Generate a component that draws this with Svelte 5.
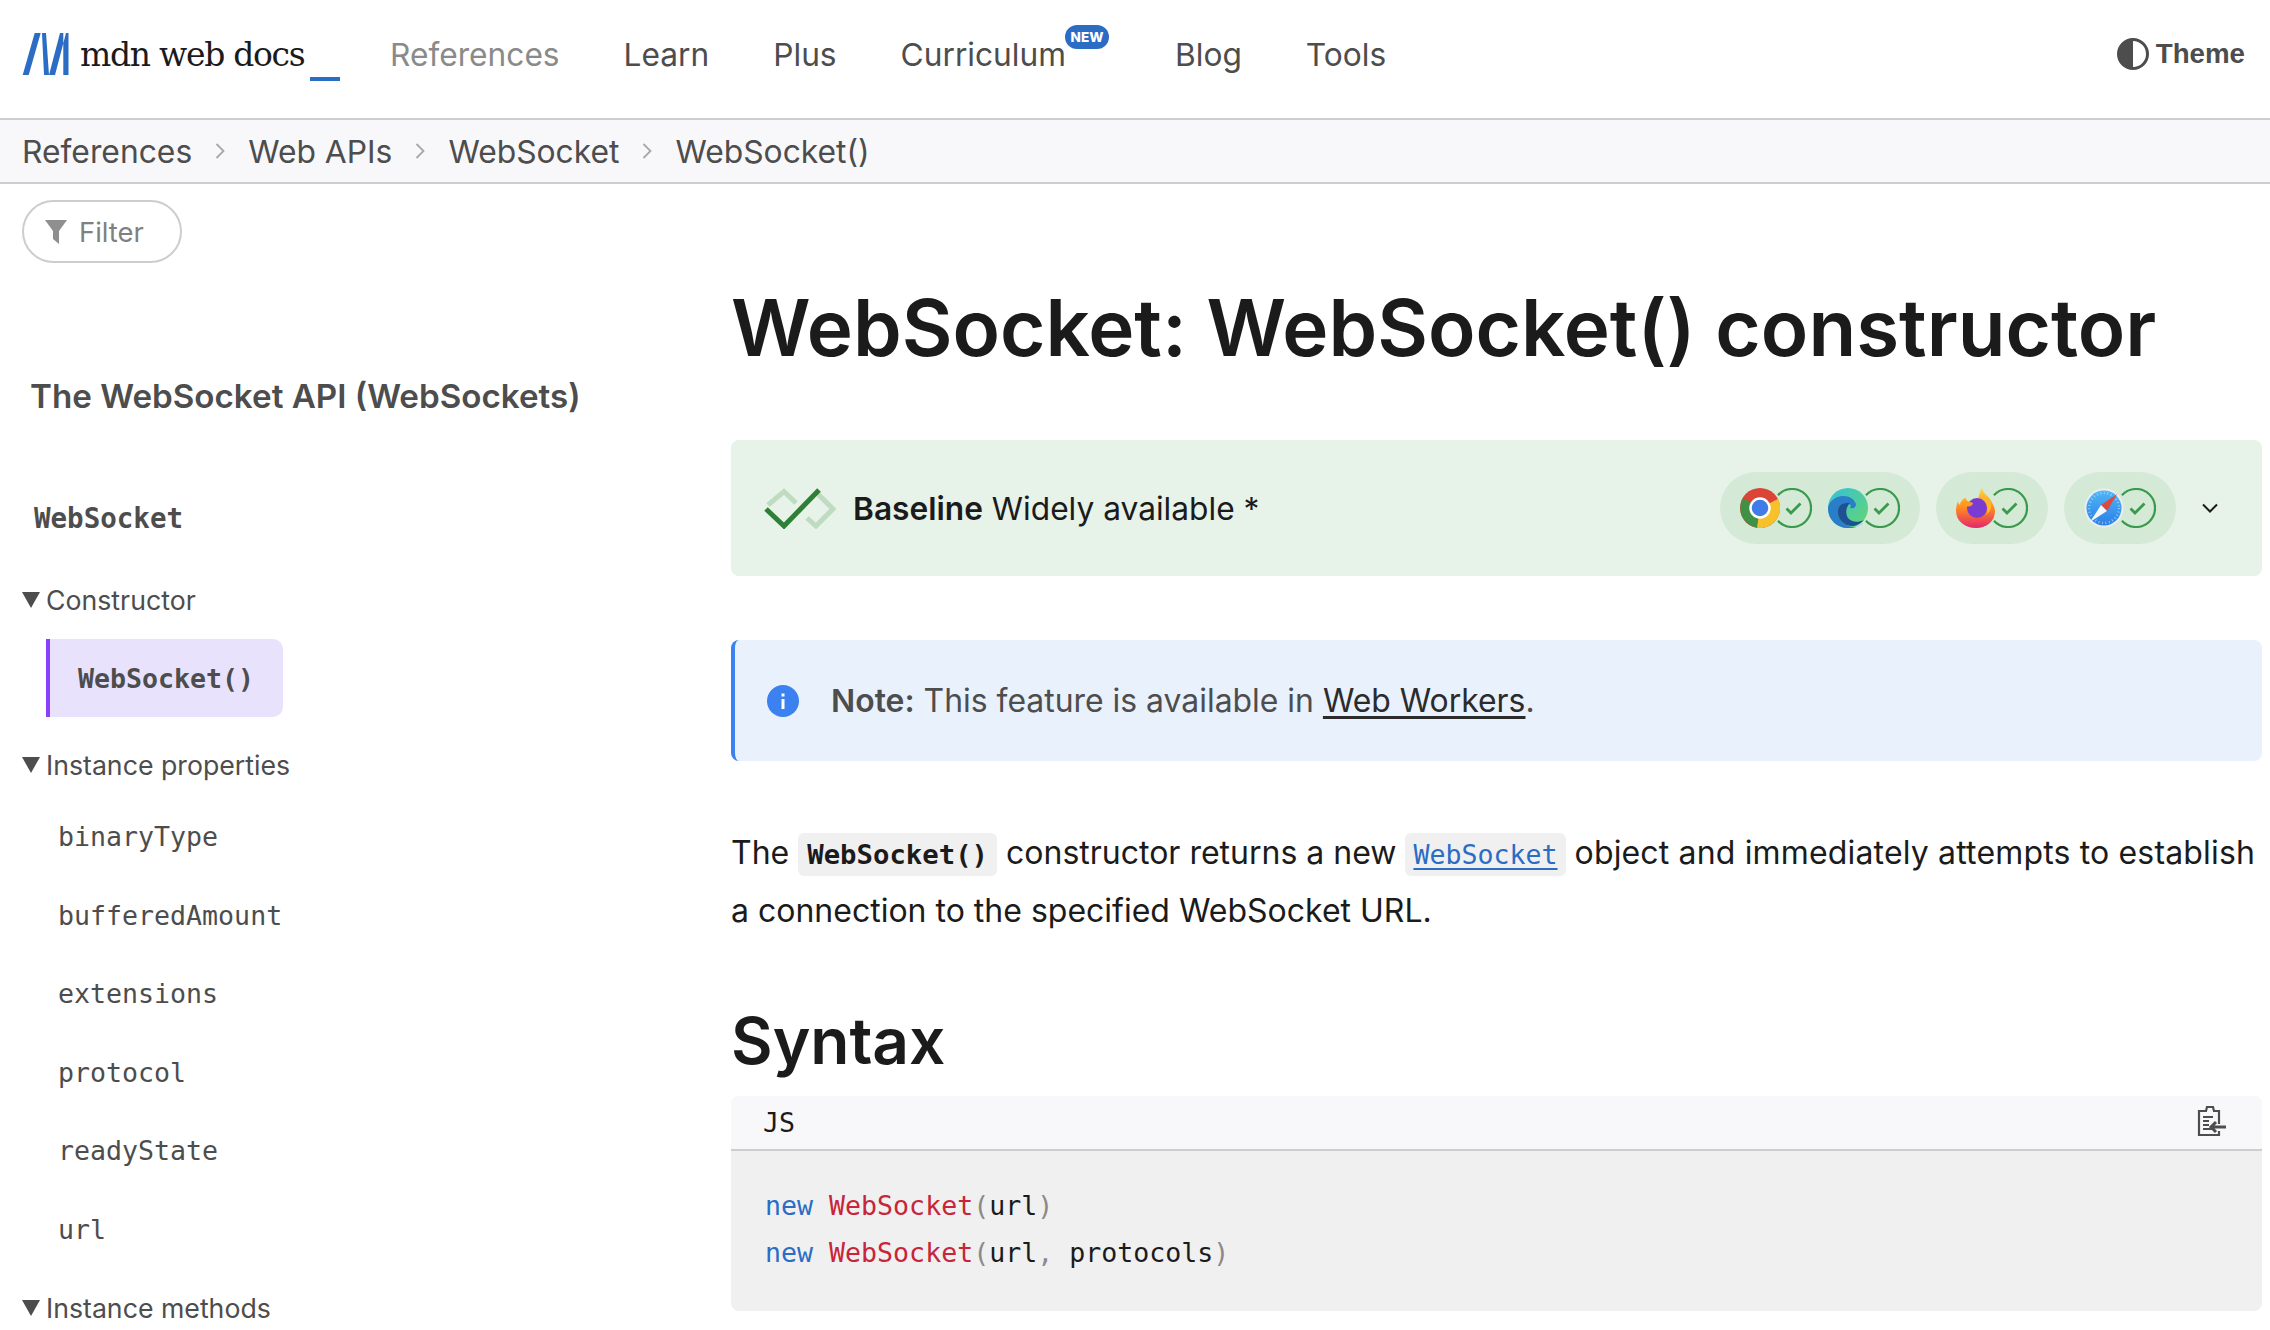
<script>
  const nav = [
    { t: 'References', dim: true },
    { t: 'Learn' },
    { t: 'Plus' },
    { t: 'Curriculum', badge: true },
    { t: 'Blog' },
    { t: 'Tools' }
  ];
  const crumbs = ['References', 'Web APIs', 'WebSocket', 'WebSocket()'];
  const props = ['binaryType', 'bufferedAmount', 'extensions', 'protocol', 'readyState', 'url'];
</script>

{#snippet check()}
  <svg class="chk" width="40" height="40" viewBox="0 0 40 40" fill="none" stroke="#3a9a4b"><path d="M5.900 7.300A19 19 0 1 1 5.900 32.700" stroke-width="2.200"/><path d="M14.500 20.500l4.500 4.500 9.500-9.500" stroke-width="2.800"/></svg>
{/snippet}

<div class="page">
  <header class="top">
    <a class="logo" href="#top">
      <svg width="48" height="42" viewBox="0 0 48 42" fill="#2b6cc4"><path d="M.7 42h6L18.700 0h-6zM20 0h4l3 42h-5zM27 42h6L44 0h-6zM41.300 0h5.200v42h-5.200z"/></svg>
      <span class="word">mdn web docs</span>
      <span class="under"></span>
    </a>
    <nav class="nav">
      {#each nav as n}
        <span class="item" class:dim={n.dim} class:hasbadge={n.badge}>{n.t}{#if n.badge}<b class="badge">NEW</b>{/if}</span>
      {/each}
    </nav>
    <div class="theme">
      <svg width="32" height="32" viewBox="0 0 32 32"><circle cx="16" cy="16" r="14.500" fill="#fff" stroke="#4d4d4d" stroke-width="3"/><path d="M16 1a15 15 0 0 0 0 30z" fill="#4d4d4d"/></svg>
      <span>Theme</span>
    </div>
  </header>

  <div class="crumbs">
    {#each crumbs as c, i}
      {#if i > 0}
        <svg class="sep" width="10" height="18" viewBox="0 0 10 18"><path d="M1.500 2l7 7-7 7" fill="none" stroke="#a8a8a8" stroke-width="1.800"/></svg>
      {/if}
      <span>{c}</span>
    {/each}
  </div>

  <div class="body">
    <aside class="side">
      <div class="filter">
        <svg width="22" height="24" viewBox="0 0 22 24"><path d="M0 0h22l-8 11v13l-6-5v-8z" fill="#8f8f8f"/></svg>
        <span>Filter</span>
      </div>
      <div class="api">The WebSocket API (WebSockets)</div>
      <div class="iface">WebSocket</div>
      <div class="group first"><i class="tri"></i>Constructor</div>
      <div class="active"><span>WebSocket()</span></div>
      <div class="group g2"><i class="tri"></i>Instance properties</div>
      <ul class="props">
        {#each props as p}<li>{p}</li>{/each}
      </ul>
      <div class="group g3"><i class="tri"></i>Instance methods</div>
    </aside>

    <main class="main">
      <h1>WebSocket: WebSocket() constructor</h1>

      <section class="baseline">
        <svg class="bl" width="72" height="41" viewBox="0 0 72 41" fill="none" stroke-width="5">
          <path d="M4 17L20 3.500 32 15M54 6l15 15-17 17-9-8" stroke="#bfdcc2"/>
          <path d="M2 21l18 17L55 2" stroke="#2e8037"/>
        </svg>
        <span class="bl-text"><b>Baseline</b> Widely available *</span>
        <div class="pills">
          <div class="pill">
            <span class="br">
              <svg width="40" height="40" viewBox="0 0 40 40">
                <circle cx="20" cy="20" r="20" fill="#db4437"/>
                <path d="M20 20L3 10A20 20 0 0 0 17 39.800z" fill="#3e9145"/>
                <path d="M20 20L38 11A20 20 0 0 1 17 39.800z" fill="#f7c12c"/>
                <circle cx="20" cy="20" r="9.500" fill="#3f7ce8" stroke="#fff" stroke-width="2.500"/>
              </svg>
              {@render check()}
            </span>
            <span class="br">
              <svg width="40" height="40" viewBox="0 0 40 40">
                <defs><linearGradient id="e1" x1="0" y1="0" x2="1" y2="1"><stop offset="0" stop-color="#35c1d8"/><stop offset="1" stop-color="#66d66f"/></linearGradient></defs>
                <circle cx="20" cy="20" r="20" fill="url(#e1)"/>
                <path d="M0 20C1 13 8 8 15 8c7 0 11 3 13 8 0 3-2 5-6 4 2-2 0-5-4-5-6 0-9 5-8 11 1 7 8 13 16 13 4 0 7-1 10-6-3 6-9 7-16 7C9 40 0 32 0 20z" fill="#2a7dc9"/>
                <path d="M18 15c-6 0-9 5-8 11 1 7 8 13 16 12 4-1 7-3 10-6-6 3-13 2-16-2-3-5-2-11 2-15z" fill="#1e5094"/>
              </svg>
              {@render check()}
            </span>
          </div>
          <div class="pill">
            <span class="br">
              <svg width="40" height="40" viewBox="0 0 40 40">
                <defs><linearGradient id="f1" x1="0.500" y1="0" x2="0.500" y2="1"><stop offset="0" stop-color="#ffd93b"/><stop offset=".5" stop-color="#ff8a1f"/><stop offset="1" stop-color="#e5256e"/></linearGradient></defs>
                <path d="M26 0c1 5 5 7 8 11 3 5 5 9 5 12 0 10-8 17-19 17S0 33 0 23c0-4 1-7 2-10 0 2 1 3 2 4 1-4 3-7 6-7 0 2 2 4 4 4 3-2 6-3 8-3 1-4 2-8 4-11z" fill="url(#f1)"/>
                <circle cx="21" cy="20" r="10" fill="#7a3bd0"/>
                <path d="M26 10c5 4 7 10 4 17 4-3 6-7 5-12-1-4-5-7-9-5z" fill="#ffb52b"/>
                <path d="M4 15c4-2 9-2 13 0 0 3-4 4-7 3-3 0-5-1-6-3z" fill="#ff9b1f"/>
              </svg>
              {@render check()}
            </span>
          </div>
          <div class="pill">
            <span class="br">
              <svg width="40" height="40" viewBox="0 0 40 40">
                <defs><linearGradient id="s1" x1="0.500" y1="0" x2="0.500" y2="1"><stop offset="0" stop-color="#4fb6f5"/><stop offset="1" stop-color="#2a7fe6"/></linearGradient></defs>
                <circle cx="20" cy="20" r="19.500" fill="#e9eef3"/>
                <circle cx="20" cy="20" r="17.500" fill="url(#s1)"/>
                <circle cx="20" cy="20" r="15" fill="none" stroke="#cfe6fb" stroke-width="2.500" stroke-dasharray="1 2.500" opacity=".6"/>
                <path d="M33 6L17 17l6 6z" fill="#e0483e"/>
                <path d="M6 34l11-17 6 6z" fill="#f4f6f8"/>
              </svg>
              {@render check()}
            </span>
          </div>
          <svg class="chev" width="16" height="10" viewBox="0 0 16 10"><path d="M1 1.500l7 7 7-7" fill="none" stroke="#1b1b1b" stroke-width="2"/></svg>
        </div>
      </section>

      <aside class="note">
        <svg width="32" height="32" viewBox="0 0 32 32"><circle cx="16" cy="16" r="16" fill="#3b82f0"/><rect x="14.500" y="14" width="3" height="10" fill="#fff"/><rect x="14.500" y="8.500" width="3" height="3" fill="#fff"/></svg>
        <p><b>Note:</b> This feature is available in <a href="#top">Web Workers</a>.</p>
      </aside>

      <p class="lead">The <code class="c strong">WebSocket()</code> constructor returns a new <code class="c"><a href="#top">WebSocket</a></code> <span class="tail">object and immediately attempts to establish</span> a connection to the specified WebSocket URL.</p>

      <h2>Syntax</h2>

      <div class="code">
        <div class="code-head">
          <span>JS</span>
          <svg class="copy" width="30" height="32" viewBox="0 0 30 32" fill="none" stroke="#4d4d4d" stroke-width="2.200"><path d="M22 19V6h-5l-1-4h-6L9 6H2v24h20v-4"/><path d="M6 12h10M6 16h6M6 20h6M6 24h10" stroke-width="1.800"/><path d="M29 22H14M19 17l-5 5 5 5" stroke-width="3"/></svg>
        </div>
        <pre class="src"><span class="k">new</span> <span class="f">WebSocket</span><span class="p">(</span>url<span class="p">)</span>
<span class="k">new</span> <span class="f">WebSocket</span><span class="p">(</span>url<span class="p">,</span> protocols<span class="p">)</span></pre>
      </div>
    </main>
  </div>
</div>

<style>
  :global(body) { margin: 0; background: #fff; }
  .page { width: 2270px; height: 1330px; overflow: hidden; font-family: Inter, "Liberation Sans", sans-serif; color: #1b1b1b; }
  .top { height: 118px; display: flex; align-items: center; padding: 0 25px 0 22px; border-bottom: 2px solid #cdcdcd; }
  .logo { display: flex; align-items: flex-start; height: 48px; text-decoration: none; color: #1b1b1b; width: 368px; flex: none; margin-top: -5px; }
  .word { font-family: "DejaVu Serif", serif; font-size: 33px; letter-spacing: -1.300px; margin-left: 10px; line-height: 42px; padding-top: 1px; white-space: nowrap; }
  .under { width: 30px; height: 4px; background: #2b6cc4; margin: 44px 0 0 6px; flex: none; }
  .nav { display: flex; gap: 64px; font-size: 31.700px; color: #4d4d4d; margin-top: -10px; }
  .item { position: relative; white-space: nowrap; }
  .hasbadge { margin-right: 45px; }
  .dim { color: #8a8a8a; }
  .badge { position: absolute; left: 164px; top: -10px; height: 24px; box-sizing: border-box; background: #2b6cc4; color: #fff; font-size: 13.500px; font-weight: 800; padding: 0 6px; border-radius: 12px; line-height: 24px; }
  .theme { margin-left: auto; display: flex; align-items: center; gap: 7px; font-family: "Liberation Sans", sans-serif; font-weight: 700; font-size: 27.700px; color: #4d4d4d; margin-top: -10px; }
  .crumbs { height: 62px; background: #f8f8fb; border-bottom: 2px solid #cdcdcd; display: flex; align-items: center; padding-left: 22px; font-size: 31.800px; color: #4d4d4d; gap: 23px; }
  .body { display: grid; grid-template-columns: 731px 1531px; }
  .side { padding: 16px 0 0 22px; color: #4d4d4d; font-size: 26.700px; }
  .filter { width: 160px; height: 63px; box-sizing: border-box; border: 2px solid #cdcdcd; border-radius: 32px; display: flex; align-items: center; padding-left: 21px; gap: 12px; color: #808080; font-size: 27.400px; }
  .api { margin: 111px 0 0 8px; font-size: 33.200px; font-weight: 600; line-height: 44px; white-space: nowrap; }
  .iface { margin: 78px 0 0 12px; font-family: "DejaVu Sans Mono", monospace; font-weight: 700; font-size: 27.500px; line-height: 44px; }
  .group { display: flex; align-items: center; line-height: 40px; white-space: nowrap; }
  .tri { width: 0; height: 0; border-left: 9px solid transparent; border-right: 9px solid transparent; border-top: 16px solid #4d4d4d; margin-right: 6px; }
  .first { margin-top: 40px; }
  .active { margin: 19px 0 0 24px; width: 237px; height: 78px; box-sizing: border-box; background: #e9e2fd; border-left: 4px solid #8a3ffc; border-radius: 0 10px 10px 0; display: flex; align-items: center; padding-left: 28px; font-family: "DejaVu Sans Mono", monospace; font-weight: 700; font-size: 26.600px; }
  .g2 { margin-top: 28px; }
  .props { list-style: none; margin: 13px 0 0 36px; padding: 0; font-family: "DejaVu Sans Mono", monospace; font-size: 26.600px; }
  .props li { height: 78.600px; line-height: 78px; }
  .g3 { margin-top: 18px; }
  .main { min-width: 0; }
  h1 { font-size: 78.100px; font-weight: 600; line-height: 96px; margin: 96px 0 0; white-space: nowrap; color: #1b1b1b; }
  .baseline { margin-top: 64px; height: 136px; background: #e7f2e8; border-radius: 8px; display: flex; align-items: center; padding-left: 33px; box-sizing: border-box; }
  .bl { flex: none; }
  .bl-text { margin-left: 17px; font-size: 31.700px; white-space: nowrap; }
  .bl-text b { font-weight: 600; }
  .pills { margin-left: auto; display: flex; align-items: center; gap: 16px; }
  .pill { height: 72px; box-sizing: border-box; padding: 0 20px; background: #d4ead7; border-radius: 36px; display: flex; align-items: center; gap: 16px; }
  .br { display: flex; width: 72px; }
  .br svg { flex: none; }
  .chk { margin-left: -8px; }
  .chev { margin: 0 44px 0 10px; }
  .note { margin-top: 64px; height: 121px; box-sizing: border-box; background: #e9f1fd; border-left: 4px solid #3b82f0; border-radius: 8px; display: flex; align-items: center; padding-left: 32px; gap: 32px; color: #4d4d4d; font-size: 31.900px; }
  .note p { margin: 0; }
  .note b { font-weight: 600; }
  .note a { color: #2b2b2b; text-decoration: underline; text-underline-offset: 4px; }
  .lead { margin: 64px 0 0; font-size: 32px; line-height: 55.500px; }
  .c { font-family: "DejaVu Sans Mono", monospace; font-size: 26.600px; background: #f0f0f0; border-radius: 6px; padding: 6px 8px; }
  .strong { font-weight: 700; font-size: 27.300px; padding: 6px 9px; }
  .tail { letter-spacing: 0.160px; }
  .c a { color: #2b6cc4; text-decoration: underline; text-underline-offset: 4px; }
  h2 { font-size: 64px; font-weight: 600; line-height: 76px; margin: 64.500px 0 0; }
  .code { margin-top: 17px; border-radius: 8px; overflow: hidden; background: #f0f0f0; height: 215px; }
  .code-head { height: 55px; box-sizing: border-box; background: #f8f8fb; border-bottom: 2px solid #cdcdcd; display: flex; align-items: center; justify-content: space-between; padding: 0 35px 0 32px; font-family: "DejaVu Sans Mono", monospace; font-size: 26.600px; }
  .copy { margin-top: -2px; }
  .src { margin: 0; padding: 31.500px 0 0 34px; font-family: "DejaVu Sans Mono", monospace; font-size: 26.600px; line-height: 47px; color: #1b1b1b; }
  .k { color: #2b6cc4; }
  .f { color: #c8243a; }
  .p { color: #8a8a8a; }
</style>
